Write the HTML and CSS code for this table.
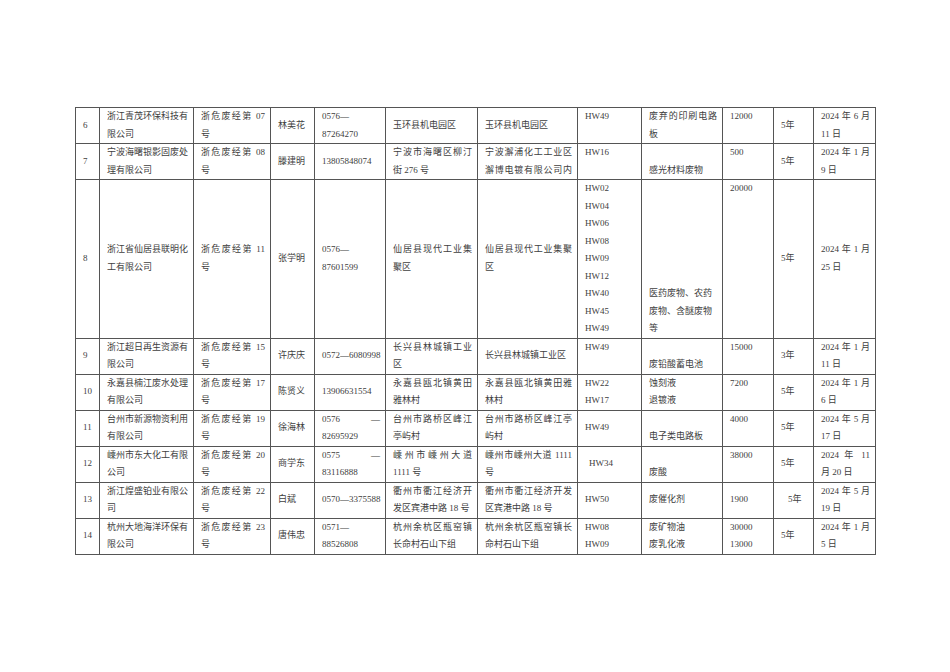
FILE: index.html
```html
<!DOCTYPE html>
<html lang="zh-CN">
<head>
<meta charset="utf-8">
<title>危险废物经营单位</title>
<link rel="stylesheet" href="styles.css">
</head>
<body>
<div class="page">
<table class="grid">
<colgroup>
<col class="c1"><col class="c2"><col class="c3"><col class="c4"><col class="c5"><col class="c6">
<col class="c7"><col class="c8"><col class="c9"><col class="c10"><col class="c11"><col class="c12">
</colgroup>
<tbody>
<tr>
<td class="m">6</td>
<td><span class="ln j">浙江青茂环保科技有</span><span class="ln">限公司</span></td>
<td><span class="ln j">浙危废经第 07</span><span class="ln">号</span></td>
<td class="m">林美花</td>
<td><span class="ln">0576—</span><span class="ln">87264270</span></td>
<td class="m">玉环县机电园区</td>
<td class="m">玉环县机电园区</td>
<td>HW49</td>
<td><span class="ln j">废弃的印刷电路</span><span class="ln">板</span></td>
<td>12000</td>
<td class="m">5年</td>
<td><span class="ln j">2024 年 6 月</span><span class="ln">11 日</span></td>
</tr>
<tr>
<td class="m">7</td>
<td><span class="ln j">宁波海曙银影固废处</span><span class="ln">理有限公司</span></td>
<td><span class="ln j">浙危废经第 08</span><span class="ln">号</span></td>
<td class="m">滕建明</td>
<td class="m">13805848074</td>
<td><span class="ln j">宁波市海曙区柳汀</span><span class="ln">街 276 号</span></td>
<td><span class="ln j">宁波澥浦化工工业区</span><span class="ln j">澥博电镀有限公司内</span></td>
<td>HW16</td>
<td class="b">感光材料废物</td>
<td>500</td>
<td class="m">5年</td>
<td><span class="ln j">2024 年 1 月</span><span class="ln">9 日</span></td>
</tr>
<tr>
<td class="m">8</td>
<td class="m"><span class="ln j">浙江省仙居县联明化</span><span class="ln">工有限公司</span></td>
<td class="m"><span class="ln j">浙危废经第 11</span><span class="ln">号</span></td>
<td class="m">张学明</td>
<td class="m"><span class="ln">0576—</span><span class="ln">87601599</span></td>
<td class="m"><span class="ln j">仙居县现代工业集</span><span class="ln">聚区</span></td>
<td class="m"><span class="ln j">仙居县现代工业集聚</span><span class="ln">区</span></td>
<td><span class="ln">HW02</span><span class="ln">HW04</span><span class="ln">HW06</span><span class="ln">HW08</span><span class="ln">HW09</span><span class="ln">HW12</span><span class="ln">HW40</span><span class="ln">HW45</span><span class="ln">HW49</span></td>
<td class="b"><span class="ln">医药废物、农药</span><span class="ln">废物、含醚废物</span><span class="ln">等</span></td>
<td>20000</td>
<td class="m">5年</td>
<td class="m"><span class="ln j">2024 年 1 月</span><span class="ln">25 日</span></td>
</tr>
<tr>
<td class="m">9</td>
<td><span class="ln j">浙江超日再生资源有</span><span class="ln">限公司</span></td>
<td><span class="ln j">浙危废经第 15</span><span class="ln">号</span></td>
<td class="m">许庆庆</td>
<td class="m">0572—6080998</td>
<td><span class="ln j">长兴县林城镇工业</span><span class="ln">区</span></td>
<td class="m">长兴县林城镇工业区</td>
<td>HW49</td>
<td class="b">废铅酸蓄电池</td>
<td>15000</td>
<td class="m">3年</td>
<td><span class="ln j">2024 年 1 月</span><span class="ln">11 日</span></td>
</tr>
<tr>
<td class="m">10</td>
<td><span class="ln j">永嘉县楠江废水处理</span><span class="ln">有限公司</span></td>
<td><span class="ln j">浙危废经第 17</span><span class="ln">号</span></td>
<td class="m">陈贤义</td>
<td class="m">13906631554</td>
<td><span class="ln j">永嘉县瓯北镇黄田</span><span class="ln">雅林村</span></td>
<td><span class="ln j">永嘉县瓯北镇黄田雅</span><span class="ln">林村</span></td>
<td><span class="ln">HW22</span><span class="ln">HW17</span></td>
<td><span class="ln">蚀刻液</span><span class="ln">退镀液</span></td>
<td>7200</td>
<td class="m">5年</td>
<td><span class="ln j">2024 年 1 月</span><span class="ln">6 日</span></td>
</tr>
<tr>
<td class="m">11</td>
<td><span class="ln j">台州市新源物资利用</span><span class="ln">有限公司</span></td>
<td><span class="ln j">浙危废经第 19</span><span class="ln">号</span></td>
<td class="m">徐海林</td>
<td><span class="ln j">0576 —</span><span class="ln">82695929</span></td>
<td><span class="ln j">台州市路桥区峰江</span><span class="ln">亭屿村</span></td>
<td><span class="ln j">台州市路桥区峰江亭</span><span class="ln">屿村</span></td>
<td class="m">HW49</td>
<td class="b">电子类电路板</td>
<td>4000</td>
<td class="m">5年</td>
<td><span class="ln j">2024 年 5 月</span><span class="ln">17 日</span></td>
</tr>
<tr>
<td class="m">12</td>
<td><span class="ln j">嵊州市东大化工有限</span><span class="ln">公司</span></td>
<td><span class="ln j">浙危废经第 20</span><span class="ln">号</span></td>
<td class="m">商学东</td>
<td><span class="ln j">0575 —</span><span class="ln">83116888</span></td>
<td><span class="ln j">嵊州市嵊州大道</span><span class="ln">1111 号</span></td>
<td><span class="ln j">嵊州市嵊州大道 1111</span><span class="ln">号</span></td>
<td class="m ind">HW34</td>
<td class="b">废酸</td>
<td>38000</td>
<td class="m">5年</td>
<td><span class="ln j">2024 年 11</span><span class="ln">月 20 日</span></td>
</tr>
<tr>
<td class="m">13</td>
<td><span class="ln j">浙江煌盛铂业有限公</span><span class="ln">司</span></td>
<td><span class="ln j">浙危废经第 22</span><span class="ln">号</span></td>
<td class="m">白斌</td>
<td class="m">0570—3375588</td>
<td><span class="ln j">衢州市衢江经济开</span><span class="ln">发区宾港中路 18 号</span></td>
<td><span class="ln j">衢州市衢江经济开发</span><span class="ln">区宾港中路 18 号</span></td>
<td class="m">HW50</td>
<td class="m">废催化剂</td>
<td class="m">1900</td>
<td class="m ind2">5年</td>
<td><span class="ln j">2024 年 5 月</span><span class="ln">19 日</span></td>
</tr>
<tr>
<td class="m">14</td>
<td><span class="ln j">杭州大地海洋环保有</span><span class="ln">限公司</span></td>
<td><span class="ln j">浙危废经第 23</span><span class="ln">号</span></td>
<td class="m">唐伟忠</td>
<td><span class="ln">0571—</span><span class="ln">88526808</span></td>
<td><span class="ln j">杭州余杭区瓶窑镇</span><span class="ln">长命村石山下组</span></td>
<td><span class="ln j">杭州余杭区瓶窑镇长</span><span class="ln">命村石山下组</span></td>
<td><span class="ln">HW08</span><span class="ln">HW09</span></td>
<td><span class="ln">废矿物油</span><span class="ln">废乳化液</span></td>
<td><span class="ln">30000</span><span class="ln">13000</span></td>
<td class="m">5年</td>
<td><span class="ln j">2024 年 1 月</span><span class="ln">5 日</span></td>
</tr>
</tbody>
</table>
</div>
</body>
</html>
```

FILE: styles.css
```css
html, body {
  margin: 0;
  padding: 0;
  background: #ffffff;
}

.page {
  padding: 107px 0 0 75px;
}

.grid {
  border-collapse: collapse;
  table-layout: fixed;
  width: 800px;
  font-family: "Liberation Serif", "Noto Sans CJK SC", serif;
  font-size: 9px;
  line-height: 17.5px;
  color: #404040;
  -webkit-font-smoothing: antialiased;
}

.c1 { width: 24px; }
.c2 { width: 94px; }
.c3 { width: 77px; }
.c4 { width: 44px; }
.c5 { width: 71px; }
.c6 { width: 92px; }
.c7 { width: 100px; }
.c8 { width: 64px; }
.c9 { width: 81px; }
.c10 { width: 51px; }
.c11 { width: 40px; }
.c12 { width: 62px; }

.grid td {
  border: 1px solid #555555;
  padding: 0 5px 0 7px;
  vertical-align: top;
  text-align: left;
  white-space: nowrap;
  overflow: hidden;
}

.grid td.m { vertical-align: middle; }
.grid td.b { vertical-align: bottom; }
.grid td.ind { padding-left: 11px; }
.grid td.ind2 { padding-left: 14px; }

.ln {
  display: block;
  white-space: nowrap;
}

.ln.j {
  text-align: justify;
  text-align-last: justify;
}
```
